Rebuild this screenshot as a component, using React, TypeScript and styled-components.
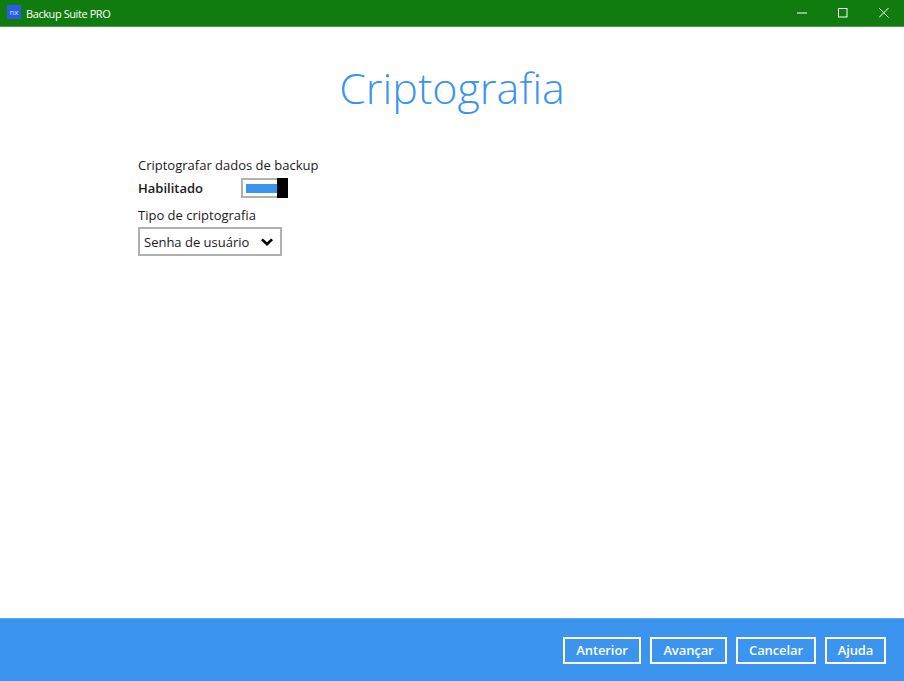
import React from "react";
import styled, { createGlobalStyle } from "styled-components";

const Global = createGlobalStyle`
  html, body { margin: 0; padding: 0; background: #fff; }
  * { box-sizing: border-box; }
`;

const Page = styled.div`
  width: 904px;
  height: 681px;
  display: flex;
  flex-direction: column;
  font-family: "Open Sans", "Noto Sans", sans-serif;
  color: #1a1a1a;
  overflow: hidden;
`;

const TitleBar = styled.header`
  height: 27px;
  flex: none;
  background: #107c10;
  border-bottom: 1px solid #4c9c4c;
  display: flex;
  align-items: center;
  color: #fff;
  font-size: 11px;
  padding-left: 7px;
`;

const AppIcon = styled.span`
  width: 14px;
  height: 14px;
  background: #2a5ce6;
  color: #cfe0ff;
  font-size: 8px;
  line-height: 13px;
  text-align: center;
  margin: 0 5px 2px 0;
  border-radius: 1px;
`;

const AppName = styled.span`
  flex: 1;
  letter-spacing: -0.42px;
`;

const WindowButton = styled.span`
  width: 41px;
  height: 26px;
  display: flex;
  align-items: center;
  justify-content: center;
`;

const Main = styled.main`
  flex: 1;
  display: flex;
  flex-direction: column;
  padding: 0 138px;
`;

const Title = styled.h1`
  margin: 31px 0 0;
  font-size: 43px;
  font-weight: 300;
  line-height: 60px;
  text-align: center;
  color: #3b94ee;
`;

const FieldLabel = styled.div<{ $top: number }>`
  margin-top: ${(p) => p.$top}px;
  font-size: 13px;
  line-height: 18px;
`;

const ToggleRow = styled.div`
  margin-top: 3px;
  display: flex;
  align-items: center;
  height: 22px;
`;

const ToggleLabel = styled.span`
  width: 103px;
  font-size: 13px;
  font-weight: 600;
`;

const Toggle = styled.span`
  position: relative;
  width: 47px;
  height: 20px;
  border: 2px solid #b0b0b0;
  border-right: none;
  padding: 4px 11px 0 3px;
  display: block;
`;

const ToggleFill = styled.span`
  display: block;
  height: 9px;
  background: #3b94ee;
`;

const ToggleThumb = styled.span`
  position: absolute;
  top: -2px;
  right: 0;
  width: 11px;
  height: 20px;
  background: #000;
`;

const Select = styled.div`
  margin-top: 3px;
  width: 144px;
  height: 29px;
  border: 2px solid #b0b0b0;
  display: flex;
  align-items: center;
  justify-content: space-between;
  padding: 0 6px 0 4px;
  font-size: 13px;
`;

const Footer = styled.footer`
  height: 63px;
  flex: none;
  background: #3b94ee;
  border-top: 1px solid #63abf2;
  display: flex;
  align-items: center;
  justify-content: flex-end;
  gap: 9px;
  padding: 0 18px 0 0;
`;

const FooterButton = styled.button<{ $w: number }>`
  width: ${(p) => p.$w}px;
  height: 27px;
  background: transparent;
  border: 2px solid #fff;
  color: #fff;
  font-family: inherit;
  font-size: 13px;
  font-weight: 600;
  letter-spacing: -0.1px;
  padding: 0;
`;

export default function App() {
  return (
    <Page>
      <Global />
      <TitleBar>
        <AppIcon>nx</AppIcon>
        <AppName>Backup Suite PRO</AppName>
        <WindowButton>
          <svg width="10" height="10" viewBox="0 0 10 10"><path d="M0 5h10" stroke="#fff" strokeWidth="1" /></svg>
        </WindowButton>
        <WindowButton>
          <svg width="10" height="10" viewBox="0 0 10 10"><rect x="0.5" y="0.5" width="8.5" height="8.5" fill="none" stroke="#fff" /></svg>
        </WindowButton>
        <WindowButton>
          <svg width="10" height="10" viewBox="0 0 10 10"><path d="M0 0l9.5 9.5M9.5 0L0 9.5" stroke="#fff" strokeWidth="1" /></svg>
        </WindowButton>
      </TitleBar>
      <Main>
        <Title>Criptografia</Title>
        <FieldLabel $top={38}>Criptografar dados de backup</FieldLabel>
        <ToggleRow>
          <ToggleLabel>Habilitado</ToggleLabel>
          <Toggle>
            <ToggleFill />
            <ToggleThumb />
          </Toggle>
        </ToggleRow>
        <FieldLabel $top={7}>Tipo de criptografia</FieldLabel>
        <Select>
          <span>Senha de usuário</span>
          <svg width="14" height="8" viewBox="0 0 14 8"><path d="M1 2.2L2.8 .5 7 4.2 11.2 .5 13 2.2 7 8z" fill="#000" /></svg>
        </Select>
      </Main>
      <Footer>
        <FooterButton $w={78}>Anterior</FooterButton>
        <FooterButton $w={77}>Avançar</FooterButton>
        <FooterButton $w={80}>Cancelar</FooterButton>
        <FooterButton $w={61}>Ajuda</FooterButton>
      </Footer>
    </Page>
  );
}
